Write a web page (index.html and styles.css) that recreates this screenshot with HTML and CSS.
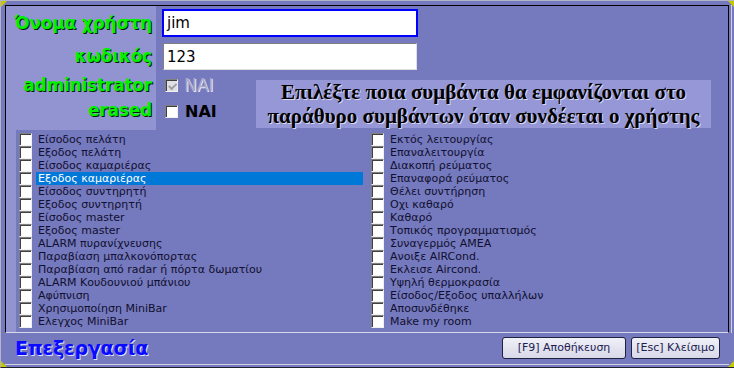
FILE: index.html
```html
<!DOCTYPE html>
<html lang="el">
<head>
<meta charset="utf-8">
<title>Επεξεργασία</title>
<link rel="stylesheet" href="styles.css">
</head>
<body>
<div class="window">
  <span class="corner tl"></span>
  <span class="corner tr"></span>
  <span class="corner bl"></span>
  <span class="corner br"></span>
  <div class="panel">
    <div class="top">
      <div class="labels">
        <div class="lbl">Όνομα χρήστη</div>
        <div class="lbl">κωδικός</div>
        <div class="lbl">administrator</div>
        <div class="lbl">erased</div>
      </div>
      <div class="fields">
        <div class="f-user"><div class="input focus">jim</div></div>
        <div class="f-pass"><div class="input">123</div></div>
        <div class="f-admin"><span class="cb checked disabled"></span><span class="nai disabled">NAI</span></div>
        <div class="f-erased"><span class="cb"></span><span class="nai bold">NAI</span></div>
        <div class="info">Επιλέξτε ποια συμβάντα θα εμφανίζονται στο<br>παράθυρο συμβάντων όταν συνδέεται ο χρήστης</div>
      </div>
    </div>
    <div class="list">
      <div class="band"></div>
      <ul class="col left">
        <li><span class="cb"></span><span class="txt">Είσοδος πελάτη</span></li>
        <li><span class="cb"></span><span class="txt">Εξοδος πελάτη</span></li>
        <li><span class="cb"></span><span class="txt">Είσοδος καμαριέρας</span></li>
        <li class="sel"><span class="cb"></span><span class="txt">Εξοδος καμαριέρας</span></li>
        <li><span class="cb"></span><span class="txt">Είσοδος συντηρητή</span></li>
        <li><span class="cb"></span><span class="txt">Εξοδος συντηρητή</span></li>
        <li><span class="cb"></span><span class="txt">Είσοδος master</span></li>
        <li><span class="cb"></span><span class="txt">Εξοδος master</span></li>
        <li><span class="cb"></span><span class="txt">ALARM πυρανίχνευσης</span></li>
        <li><span class="cb"></span><span class="txt">Παραβίαση μπαλκονόπορτας</span></li>
        <li><span class="cb"></span><span class="txt">Παραβίαση από radar ή πόρτα δωματίου</span></li>
        <li><span class="cb"></span><span class="txt">ALARM Κουδουνιού μπάνιου</span></li>
        <li><span class="cb"></span><span class="txt">Αφύπνιση</span></li>
        <li><span class="cb"></span><span class="txt">Χρησιμοποίηση MiniBar</span></li>
        <li><span class="cb"></span><span class="txt">Ελεγχος MiniBar</span></li>
      </ul>
      <ul class="col right">
        <li><span class="cb"></span><span class="txt">Εκτός λειτουργίας</span></li>
        <li><span class="cb"></span><span class="txt">Επαναλειτουργία</span></li>
        <li><span class="cb"></span><span class="txt">Διακοπή ρεύματος</span></li>
        <li><span class="cb"></span><span class="txt">Επαναφορά ρεύματος</span></li>
        <li><span class="cb"></span><span class="txt">Θέλει συντήρηση</span></li>
        <li><span class="cb"></span><span class="txt">Οχι καθαρό</span></li>
        <li><span class="cb"></span><span class="txt">Καθαρό</span></li>
        <li><span class="cb"></span><span class="txt">Τοπικός προγραμματισμός</span></li>
        <li><span class="cb"></span><span class="txt">Συναγερμός ΑΜΕΑ</span></li>
        <li><span class="cb"></span><span class="txt">Ανοιξε AIRCond.</span></li>
        <li><span class="cb"></span><span class="txt">Εκλεισε Aircond.</span></li>
        <li><span class="cb"></span><span class="txt">Υψηλή θερμοκρασία</span></li>
        <li><span class="cb"></span><span class="txt">Είσοδος/Εξοδος υπαλλήλων</span></li>
        <li><span class="cb"></span><span class="txt">Αποσυνδέθηκε</span></li>
        <li><span class="cb"></span><span class="txt">Make my room</span></li>
      </ul>
    </div>
  </div>
  <div class="footer">
    <div class="title">Επεξεργασία</div>
    <div class="buttons">
      <button class="btn save">[F9] Αποθήκευση</button>
      <button class="btn close">[Esc] Κλείσιμο</button>
    </div>
  </div>
</div>
</body>
</html>
```
FILE: styles.css
```css
* { box-sizing: border-box; }
html, body { margin: 0; padding: 0; }
body {
  width: 734px;
  height: 368px;
  overflow: hidden;
  background: #7579bd;
  font-family: "DejaVu Sans", Verdana, sans-serif;
}
.window {
  position: relative;
  width: 734px;
  height: 368px;
  background: #7579bd;
  border-top: 1px solid #b4b4c8;
  border-left: 1px solid #b4b4c8;
  border-bottom: 1px solid #202030;
  padding: 4px 5px 2px 4px;
  display: flex;
  flex-direction: column;
}
.corner { position: absolute; width: 0; height: 0; }
.corner.tl { left: 0; top: 0; border-top: 6px solid #c8c800; border-right: 6px solid transparent; }
.corner.tr { right: 0; top: 0; border-top: 6px solid #c8c800; border-left: 6px solid transparent; }
.corner.bl { left: 0; bottom: 0; border-bottom: 6px solid #c8c800; border-right: 6px solid transparent; }
.corner.br { right: 0; bottom: 0; border-bottom: 6px solid #c8c800; border-left: 6px solid transparent; }

.panel {
  border-top: 1px solid #000;
  border-left: 1px solid #000;
  border-right: 1px solid #000;
  box-shadow: 2px 0 0 #7579bd, 3px 0 0 #d0d0e0;
  border-bottom: 1px solid #d8d8e8;
  height: 328px;
  display: flex;
  flex-direction: column;
}
.top {
  display: grid;
  grid-template-columns: 150px 1fr;
  height: 124px;
}
.labels {
  background: #9194d0;
  display: grid;
  grid-template-rows: 34px 33px 25px 25px;
  padding-right: 4px;
}
.lbl {
  color: #00f000;
  font-weight: bold;
  font-size: 17px;
  text-align: right;
  line-height: 1;
  align-self: center;
  text-shadow: 1px 1px 0 #002000;
  white-space: nowrap;
  letter-spacing: -0.2px;
}
.fields {
  display: grid;
  grid-template-columns: 100px 455px;
  grid-template-rows: 34px 33px 25px 25px;
}
.f-user { grid-column: 1 / 3; padding: 3px 0 0 6px; }
.f-pass { grid-column: 1 / 3; padding: 3px 0 0 7px; }
.input {
  background: #fff;
  font-family: "DejaVu Sans", sans-serif;
  font-size: 15px;
  color: #000;
  display: flex;
  align-items: center;
  width: 254px;
  height: 27px;
  border-top: 1px solid #808080;
  border-left: 1px solid #808080;
  border-right: 1px solid #e0e0e0;
  border-bottom: 1px solid #e0e0e0;
  padding-left: 3px;
}
.input.focus {
  width: 256px;
  height: 28px;
  border: 2px solid #0000ff;
  padding-left: 3px;
}
.f-admin, .f-erased {
  grid-column: 1;
  display: flex;
  align-items: center;
  padding-left: 9px;
}
.f-admin { grid-row: 3; }
.f-erased { grid-row: 4; padding-top: 2px; }
.info {
  grid-column: 2;
  grid-row: 3 / 5;
  align-self: start;
  margin-top: 7px;
  height: 48px;
  background: #9597d7;
  font-family: "Liberation Serif", "Times New Roman", serif;
  font-weight: bold;
  font-size: 21px;
  line-height: 24px;
  text-align: center;
  color: #000;
  white-space: nowrap;
  text-shadow: 1px 1px 0 #d8d8f0;
}
.cb {
  display: inline-block;
  width: 13px;
  height: 13px;
  background: #fff;
  border-top: 1px solid #808080;
  border-left: 1px solid #808080;
  border-right: 1px solid #f0f0f0;
  border-bottom: 1px solid #f0f0f0;
  box-shadow: inset 1px 1px 0 #404040;
  flex: none;
  position: relative;
}
.cb.disabled { background: #e0e0e8; }
.cb.checked::after {
  content: "";
  position: absolute;
  left: 2px;
  top: 1px;
  width: 6px;
  height: 3px;
  border-left: 2px solid #a0a0a0;
  border-bottom: 2px solid #a0a0a0;
  transform: rotate(-45deg) translate(-1px, 2px);
}
.nai {
  margin-left: 6px;
  font-size: 17px;
  line-height: 1;
}
.nai.disabled { color: #a8a8c8; text-shadow: 1px 1px 0 #e8e8f8; }
.nai.bold { font-weight: bold; color: #000; margin-left: 7px; font-size: 16px; }

.list {
  flex: 1;
  display: flex;
  padding-top: 3px;
  position: relative;
}
.band {
  width: 10px;
  background: #9194d0;
  margin-top: -3px;
}
.col {
  list-style: none;
  margin: 0;
  padding: 0;
}
.col.left { width: 354px; padding-left: 3px; padding-right: 7px; }
.col.right { width: 355px; padding-left: 1px; }
.col li {
  height: 13px;
  display: flex;
  align-items: center;
  font-size: 11px;
  color: #101030;
  line-height: 13px;
}
.col .txt {
  margin-left: 4px;
  padding-left: 2px;
  flex: 1;
  white-space: nowrap;
  height: 13px;
}
.col li.sel .txt { background: #0078d7; color: #fff; }

.footer {
  flex: 1;
  display: flex;
  align-items: center;
  justify-content: space-between;
  padding: 0 9px 2px 10px;
  border-bottom: 1px solid #d0d0e0;
}
.title {
  font-weight: bold;
  font-size: 19px;
  color: #0a0aff;
  text-shadow: 1px 1px 0 #e0e0ff;
  letter-spacing: -0.2px;
}
.buttons { display: flex; gap: 5px; }
.btn {
  height: 22px;
  border: 1px solid #202040;
  border-radius: 3px;
  background: linear-gradient(#f0f0f8, #d8d8e8);
  font-family: "DejaVu Sans", sans-serif;
  font-size: 11px;
  color: #202050;
  padding: 0;
  white-space: nowrap;
}
.btn.save { width: 124px; }
.btn.close { width: 89px; }
```
